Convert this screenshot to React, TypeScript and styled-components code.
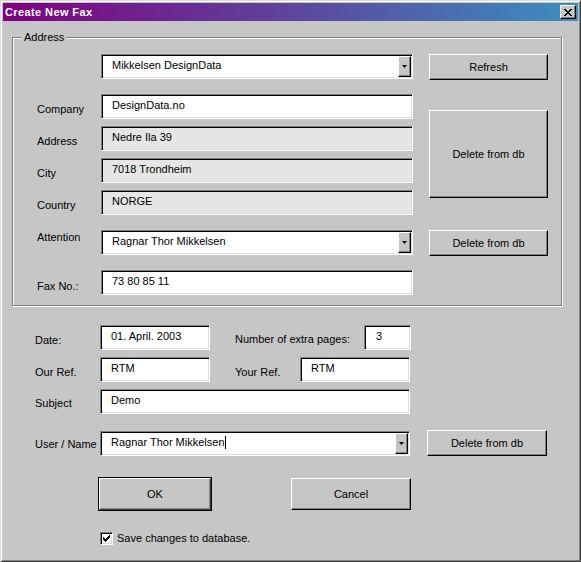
import React from 'react';
import styled, { createGlobalStyle, css } from 'styled-components';

const FACE = '#c6c6c6';

const GlobalStyle = createGlobalStyle`
  html, body {
    margin: 0;
    padding: 0;
    background: ${FACE};
  }
  body {
    font-family: 'Liberation Sans', Arial, sans-serif;
    font-size: 11px;
    color: #000;
  }
  * {
    box-sizing: border-box;
  }
`;

const raised = css`
  background: ${FACE};
  border: 1px solid;
  border-color: #fff #000 #000 #fff;
  box-shadow: inset -1px -1px #808080;
`;

const sunken = css`
  border: 1px solid;
  border-color: #808080 #fff #fff #808080;
  box-shadow: inset 1px 1px #000, inset -1px -1px #dcdcdc;
`;

const Window = styled.div`
  width: 581px;
  height: 562px;
  background: ${FACE};
  border: 1px solid;
  border-color: #dcdcdc #404040 #404040 #dcdcdc;
  box-shadow: inset 1px 1px #fff, inset -1px -1px #808080;
  padding: 2px;
  display: flex;
  flex-direction: column;
`;

const TitleBar = styled.div`
  height: 18px;
  flex: none;
  display: flex;
  align-items: center;
  justify-content: space-between;
  padding: 0 2px;
  background: linear-gradient(to right, #800080, #5a4ca0 55%, #3a90c0);
`;

const Title = styled.span`
  font-weight: bold;
  color: #fff;
  font-size: 11px;
  letter-spacing: 0.4px;
`;

const CloseButton = styled.div`
  ${raised};
  width: 16px;
  height: 14px;
  display: flex;
  align-items: center;
  justify-content: center;
`;

const GroupBox = styled.fieldset`
  margin: 10px 0 0 9px;
  width: 550px;
  padding: 10px 13px 10px 24px;
  border: 1px solid #808080;
  box-shadow: inset 1px 1px #fff, 1px 1px #fff;
  display: flex;
  min-width: 0;
`;

const Legend = styled.legend`
  margin-left: -15px;
  padding: 0 2px;
  line-height: 13px;
  background: ${FACE};
`;

const FieldColumn = styled.div`
  display: flex;
  flex-direction: column;
`;

const ButtonColumn = styled.div`
  display: flex;
  flex-direction: column;
  margin-left: 16px;
`;

const Row = styled.div<{ $mt?: number }>`
  display: flex;
  align-items: center;
  margin-top: ${(p) => p.$mt ?? 0}px;
`;

const Label = styled.span<{ $w: number; $dy?: number; $ml?: number }>`
  width: ${(p) => p.$w}px;
  flex: none;
  white-space: nowrap;
  line-height: 13px;
  margin-left: ${(p) => p.$ml ?? 0}px;
  margin-top: ${(p) => p.$dy ?? 5}px;
`;

const Field = styled.div<{ $w: number; $disabled?: boolean; $pl?: number }>`
  ${sunken};
  width: ${(p) => p.$w}px;
  height: 25px;
  flex: none;
  background: ${(p) => (p.$disabled ? '#e6e6e6' : '#fff')};
  padding: 4px 0 0 ${(p) => p.$pl ?? 10}px;
  line-height: 13px;
  white-space: nowrap;
`;

const Combo = styled.div<{ $w: number }>`
  ${sunken};
  width: ${(p) => p.$w}px;
  height: 25px;
  flex: none;
  background: #fff;
  padding: 1px;
  display: flex;
`;

const ComboText = styled.div`
  flex: 1;
  padding: 3px 0 0 9px;
  line-height: 13px;
  white-space: nowrap;
  display: flex;
  align-items: flex-start;
`;

const DropButton = styled.div`
  ${raised};
  width: 13px;
  height: 21px;
  display: flex;
  align-items: center;
  justify-content: center;
`;

const Caret = styled.span`
  display: inline-block;
  width: 1px;
  height: 13px;
  background: #000;
`;

const Button = styled.div<{ $w: number; $h?: number; $mt?: number; $ml?: number; $default?: boolean }>`
  ${raised};
  width: ${(p) => p.$w}px;
  height: ${(p) => p.$h ?? 26}px;
  margin-top: ${(p) => p.$mt ?? 0}px;
  margin-left: ${(p) => p.$ml ?? 0}px;
  flex: none;
  display: flex;
  align-items: center;
  justify-content: center;
  ${(p) =>
    p.$default &&
    css`
      outline: 1px solid #000;
      outline-offset: 0;
      border-color: #fff #404040 #404040 #fff;
    `}
`;

const Lower = styled.div`
  padding: 19px 0 0 32px;
  display: flex;
  flex-direction: column;
`;

const CheckRow = styled.label`
  display: flex;
  align-items: center;
  margin: 22px 0 0 65px;
  line-height: 13px;
`;

const CheckBox = styled.span`
  ${sunken};
  width: 13px;
  height: 13px;
  background: #fff;
  margin-right: 4px;
  display: flex;
  align-items: center;
  justify-content: center;
`;

const Arrow = () => (
  <svg width="5" height="3" viewBox="0 0 5 3">
    <polygon points="0,0 5,0 2.5,3" fill="#000" />
  </svg>
);

const ComboBox: React.FC<{ w: number; value: string; caret?: boolean }> = ({ w, value, caret }) => (
  <Combo $w={w}>
    <ComboText>
      {value}
      {caret ? <Caret /> : null}
    </ComboText>
    <DropButton>
      <Arrow />
    </DropButton>
  </Combo>
);

export default function App() {
  return (
    <>
      <GlobalStyle />
      <Window>
        <TitleBar>
          <Title>Create New Fax</Title>
          <CloseButton>
            <svg width="8" height="7" viewBox="0 0 8 7" shapeRendering="crispEdges">
              <path d="M0 0h2v1h1v1h2V1h1V0h2v1H7v1H6v1H5v1h1v1h1v1h1v1H6V6H5V5H3v1H2v1H0V6h1V5h1V4h1V3H2V2H1V1H0z" fill="#000" />
            </svg>
          </CloseButton>
        </TitleBar>

        <GroupBox>
          <Legend>Address</Legend>
          <FieldColumn>
            <Row>
              <Label $w={64} />
              <ComboBox w={312} value="Mikkelsen DesignData" />
            </Row>
            <Row $mt={15}>
              <Label $w={64}>Company</Label>
              <Field $w={312}>DesignData.no</Field>
            </Row>
            <Row $mt={7}>
              <Label $w={64}>Address</Label>
              <Field $w={312} $disabled>Nedre Ila 39</Field>
            </Row>
            <Row $mt={7}>
              <Label $w={64}>City</Label>
              <Field $w={312} $disabled>7018 Trondheim</Field>
            </Row>
            <Row $mt={7}>
              <Label $w={64}>Country</Label>
              <Field $w={312} $disabled>NORGE</Field>
            </Row>
            <Row $mt={15}>
              <Label $w={64} $dy={-11}>Attention</Label>
              <ComboBox w={312} value="Ragnar Thor Mikkelsen" />
            </Row>
            <Row $mt={15}>
              <Label $w={64} $dy={7}>Fax No.:</Label>
              <Field $w={312}>73 80 85 11</Field>
            </Row>
          </FieldColumn>
          <ButtonColumn>
            <Button $w={119}>Refresh</Button>
            <Button $w={119} $h={88} $mt={30}>Delete from db</Button>
            <Button $w={119} $mt={32}>Delete from db</Button>
          </ButtonColumn>
        </GroupBox>

        <Lower>
          <Row>
            <Label $w={65}>Date:</Label>
            <Field $w={110}>01. April. 2003</Field>
            <Label $w={129} $ml={25} $dy={3}>Number of extra pages:</Label>
            <Field $w={47} $pl={11}>3</Field>
          </Row>
          <Row $mt={7}>
            <Label $w={65}>Our Ref.</Label>
            <Field $w={110}>RTM</Field>
            <Label $w={65} $ml={25}>Your Ref.</Label>
            <Field $w={110}>RTM</Field>
          </Row>
          <Row $mt={7}>
            <Label $w={65} $dy={4}>Subject</Label>
            <Field $w={310}>Demo</Field>
          </Row>
          <Row $mt={16}>
            <Label $w={65} $dy={3}>User / Name</Label>
            <ComboBox w={310} value="Ragnar Thor Mikkelsen" caret />
            <Button $w={120} $ml={17}>Delete from db</Button>
          </Row>
          <Row $mt={22}>
            <Button $w={112} $h={32} $ml={64} $default>OK</Button>
            <Button $w={120} $h={32} $ml={80}>Cancel</Button>
          </Row>
          <CheckRow>
            <CheckBox>
              <svg width="7" height="7" viewBox="0 0 7 7" shapeRendering="crispEdges">
                <path d="M6 0h1v3H6v1H5v1H4v1H3v1H2V6H1V5H0V2h1v1h1v1h1V3h1V2h1V1h1z" fill="#000" />
              </svg>
            </CheckBox>
            Save changes to database.
          </CheckRow>
        </Lower>
      </Window>
    </>
  );
}
